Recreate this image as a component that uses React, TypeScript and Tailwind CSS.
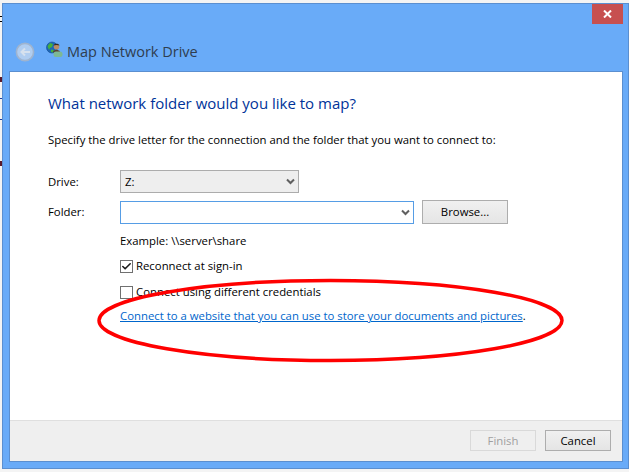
import { Check } from "lucide-react";

const fontFamily = "font-['Open_Sans','Noto_Sans',sans-serif]";

const Chevron = () => (
  <svg width="9" height="7" viewBox="0 0 9 7" className="shrink-0">
    <path d="M1 1.5 4.5 5 8 1.5" fill="none" stroke="#606060" strokeWidth="2" />
  </svg>
);

const BackArrow = () => (
  <svg width="20" height="20" viewBox="0 0 20 20">
    <circle cx="10" cy="10" r="8.6" fill="#b0cdf0" stroke="#9fb4cf" strokeWidth="1.6" />
    <path d="M15 10H6.5M10 6.5 6.5 10l3.5 3.5" fill="none" stroke="#d6e1ee" strokeWidth="2" />
  </svg>
);

const NetworkIcon = () => (
  <svg width="17" height="17" viewBox="0 0 17 17">
    <circle cx="6" cy="6.5" r="5.5" fill="#1c66b8" stroke="#174f8e" strokeWidth="0.6" />
    <path d="M1.5 5 4 2l3 1-1 3-2 1-1 2ZM5 8.5l3 .5-1 2.5-2-.5Z" fill="#45b03c" />
    <circle cx="10.5" cy="5.8" r="2.8" fill="#b98c66" />
    <path d="M7.5 4.5C8 2 13 2 13.5 4.5c-1.5-.8-4.5-.8-6 0Z" fill="#3a2a20" />
    <path d="M7 10.5c1-2 6-2 7 0v1H7Z" fill="#5a4030" />
    <rect x="7.5" y="10.5" width="9" height="5.5" rx="2.5" fill="#7db894" />
  </svg>
);

const Button = ({ label, disabled }: { label: string; disabled?: boolean }) => (
  <button
    className={`flex h-[21px] w-[66px] items-center justify-center border text-[11.35px] ${
      disabled
        ? "border-[#d9d9d9] bg-[#efefef] text-[#a0a0a0]"
        : "border-[#adadad] bg-gradient-to-b from-[#f0f0f0] to-[#e5e5e5] text-black"
    }`}
  >
    {label}
  </button>
);

export default function App() {
  return (
    <div className={`relative h-[472px] w-[629px] overflow-hidden bg-[#f4f4f4] pl-[2px] pt-[3px] ${fontFamily}`}>
      {/* bits of the page behind the window, peeking out at the left edge */}
      <span className="absolute left-0 top-[16px] h-[1px] w-[2px] bg-black" />
      <span className="absolute left-0 top-[21px] h-[1px] w-[2px] bg-black" />
      <span className="absolute left-0 top-[77px] h-[5px] w-[2px] bg-[#5a1a2a]" />
      <span className="absolute left-0 top-[98px] h-[1px] w-[2px] bg-[#2040a0]" />
      <span className="absolute left-0 top-[119px] h-[1px] w-[2px] bg-[#2040a0]" />
      <span className="absolute left-0 top-[161px] h-[5px] w-[2px] bg-[#5a1a2a]" />

      <div className="flex h-[466px] w-[627px] flex-col border border-[#5b8fd0] bg-[#69abf8]">
        <div className="relative flex h-[67px] shrink-0 items-start pl-[12px] pt-[38px]">
          <BackArrow />
          <div className="ml-[11px] -mt-[1px]">
            <NetworkIcon />
          </div>
          <span className="ml-[4px] text-[14.5px] leading-[20px] text-[#2f3d4f]">Map Network Drive</span>
          <div className="absolute right-[5px] top-0 flex h-[20px] w-[31px] items-center justify-center bg-[#c75050]">
            <svg width="9" height="8" viewBox="0 0 9 8">
              <path d="M1 .5 8 7.5M8 .5 1 7.5" stroke="#fff" strokeWidth="2" />
            </svg>
          </div>
        </div>

        <div className="ml-[6px] flex h-[391px] w-[614px] flex-col border border-[#5b8fd0] bg-white">
          <div className="flex-1 pl-[38px] pt-[21px] text-[11.35px] text-black">
            <h1 className="text-[15px] leading-[20px] text-[#003399]">What network folder would you like to map?</h1>
            <p className="mt-[19px] leading-[16px]">
              Specify the drive letter for the connection and the folder that you want to connect to:
            </p>

            <div className="mt-[22px] flex items-center">
              <span className="w-[72px]">Drive:</span>
              <div className="flex h-[23px] w-[179px] items-center justify-between border border-[#acacac] bg-[#eeeeee] pl-[4px] pr-[3px]">
                <span>Z:</span>
                <Chevron />
              </div>
            </div>

            <div className="mt-[7px] flex items-center">
              <span className="w-[72px]">Folder:</span>
              <div className="flex h-[23px] w-[294px] items-center justify-end border border-[#569de5] pr-[3px]">
                <Chevron />
              </div>
              <div className="ml-[8px]">
                <button className="flex h-[24px] w-[86px] items-center justify-center border border-[#adadad] bg-gradient-to-b from-[#f0f0f0] to-[#e5e5e5] text-black">
                  Browse...
                </button>
              </div>
            </div>

            <div className="ml-[72px] flex flex-col">
              <span className="mt-[9px] leading-[16px]">Example: \\server\share</span>
              <label className="mt-[9px] flex items-center gap-[3px] leading-[16px]">
                <span className="flex h-[13px] w-[13px] items-center justify-center border border-[#707070] bg-white">
                  <Check size={11} strokeWidth={3.5} className="text-[#1a1a1a]" />
                </span>
                Reconnect at sign-in
              </label>
              <label className="mt-[10px] flex items-center gap-[3px] leading-[16px]">
                <span className="h-[13px] w-[13px] border border-[#707070] bg-white" />
                Connect using different credentials
              </label>
              <p className="mt-[8px] leading-[16px]">
                <a className="text-[#0066cc] underline">Connect to a website that you can use to store your documents and pictures</a>.
              </p>
            </div>
          </div>

          <div className="flex h-[41px] shrink-0 items-start justify-end gap-[9px] border-t border-[#dfdfdf] bg-[#efefef] pr-[11px] pt-[9px]">
            <Button label="Finish" disabled />
            <Button label="Cancel" />
          </div>
        </div>
      </div>

      <svg width="629" height="472" viewBox="0 0 629 472" className="pointer-events-none absolute left-0 top-0">
        <ellipse cx="330.5" cy="320.5" rx="231.5" ry="40" fill="none" stroke="#ff0000" strokeWidth="3.5" />
      </svg>
    </div>
  );
}
